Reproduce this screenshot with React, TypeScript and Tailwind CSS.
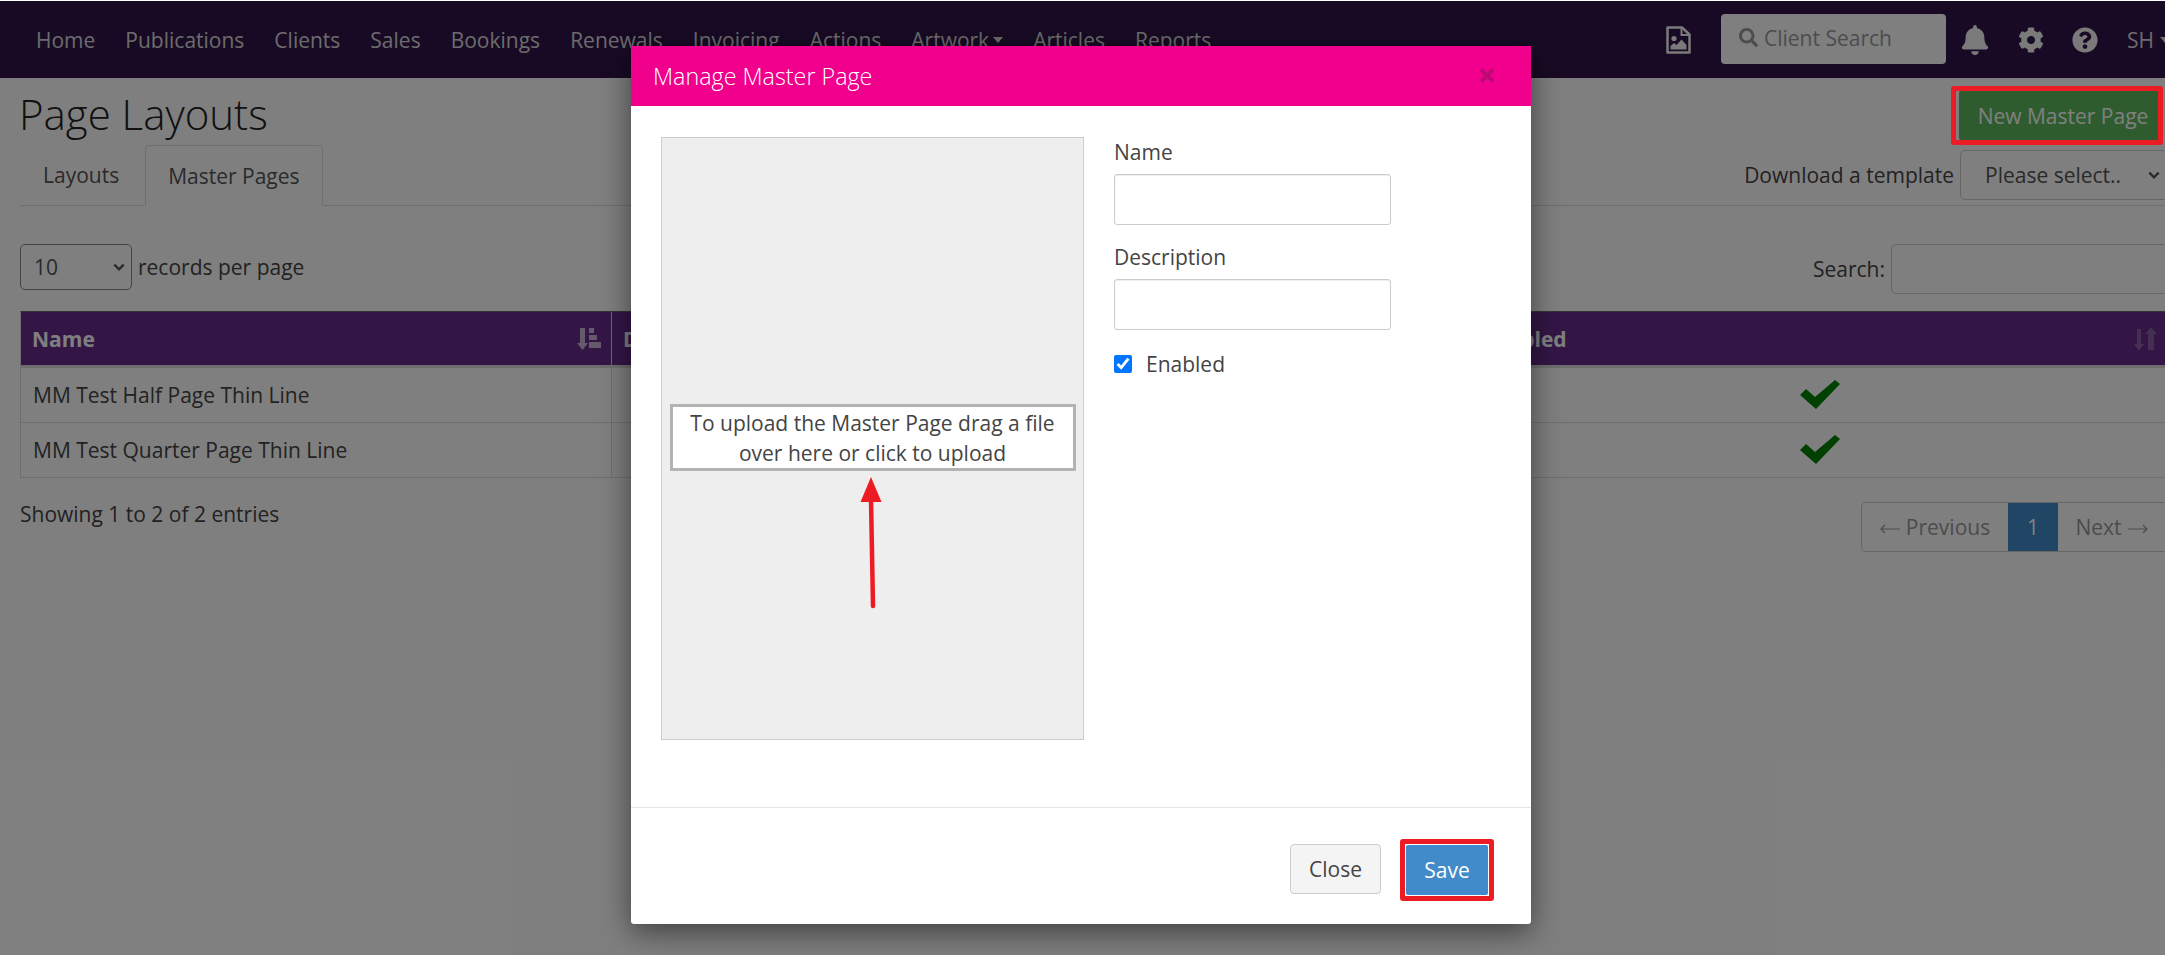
import React from "react";
import { FaSearch, FaBell, FaCog, FaQuestionCircle } from "react-icons/fa";

const nav = ["Home", "Publications", "Clients", "Sales", "Bookings", "Renewals", "Invoicing", "Actions", "Artwork", "Articles", "Reports"];

function SortAsc() {
  return (
    <svg viewBox="0 0 24 24" className="w-[24px] h-[24px]" fill="currentColor">
      <path d="M3 1h5v15h3l-5.500 7L0 16h3z" />
      <path d="M12 1h5v5h-5zM12 8h8v5h-8zM12 15h12v6H12z" />
    </svg>
  );
}
function SortBoth() {
  return (
    <svg viewBox="0 0 24 24" className="w-[24px] h-[24px]" fill="currentColor">
      <path d="M4 2h4v15h3l-5 6.500L1 17h3z" />
      <path d="M15 23V7h-3l6-6.500L24 7h-3v16z" />
    </svg>
  );
}
function Check() {
  return (
    <svg viewBox="0 0 40 30" className="w-[40px] h-[30px]" fill="#008000">
      <path d="M0 15 L6 9 L15 17 L35 0 L40 4 L16 29 Z" />
    </svg>
  );
}
function FileImage() {
  return (
    <svg viewBox="0 0 25 28" className="w-[25px] h-[28px]">
      <path d="M1.500 1.500H16L23.500 8.500V26.500H1.500Z" fill="none" stroke="currentColor" strokeWidth="2.500" strokeLinejoin="round" />
      <path d="M15.500 1.500V9H23.500" fill="none" stroke="currentColor" strokeWidth="2" />
      <circle cx="8" cy="12.500" r="2.600" fill="currentColor" />
      <path d="M4.500 23.500V20L8 17l2.500 2 5-5.500 5 5.500v4.500z" fill="currentColor" />
    </svg>
  );
}

export default function App() {
  return (
    <div className="relative w-[2165px] h-[955px] overflow-hidden bg-white text-[21px] leading-[30px] text-[#444]" style={{ fontFamily: '"Open Sans", sans-serif' }}>
      <nav className="mt-px h-[77px] bg-[#301448] flex items-center pl-[21px] text-[#d8d8d8]">
        <div className="flex items-center">
          {nav.map((n) => (
            <span key={n} className="px-[15px] flex items-center">
              {n}
              {n === "Artwork" && <span className="ml-[4px] w-0 h-0 border-x-[5px] border-x-transparent border-t-[6px] border-t-[#d8d8d8]" />}
            </span>
          ))}
        </div>
        <div className="ml-auto flex items-center text-[#f4f4f4]">
          <FileImage />
          <div className="ml-[30px] w-[225px] h-[50px] -mt-[2px] pb-[2px] rounded-[4px] bg-white flex items-center pl-[18px] text-[#999]">
            <FaSearch className="w-[19px] h-[19px] mr-[6px]" />
            Client Search
          </div>
          <FaBell className="ml-[15px] w-[28px] h-[30px]" />
          <FaCog className="ml-[29px] w-[26px] h-[26px]" />
          <FaQuestionCircle className="ml-[28px] w-[26px] h-[26px]" />
          <span className="ml-[29px] w-[38px] flex items-center text-[#d8d8d8]">
            SH
            <span className="ml-[6px] w-0 h-0 border-x-[5px] border-x-transparent border-t-[6px] border-t-[#d8d8d8]" />
          </span>
        </div>
      </nav>

      <main className="w-[2188px] px-[20px]">
        <div className="h-[67px] flex justify-between">
          <h1 className="text-[42px] leading-[50px] font-light text-[#222] mt-[11px] -ml-px">Page Layouts</h1>
          <button className="self-end mb-[5px] mr-[9px] h-[49px] w-[200px] pl-[8px] bg-[#5cb85c] text-white rounded-[2px] flex items-center justify-center">New Master Page</button>
        </div>

        <div className="h-[61px] border-b border-[#ddd] flex items-end justify-between">
          <div className="flex items-end">
            <div className="h-[60px] pl-[23px] pr-[26px] flex items-center text-[#555]">Layouts</div>
            <div className="h-[61px] -mb-px px-[22px] flex items-center border border-[#ddd] border-b-white bg-white rounded-t-[5px] text-[#555]">Master Pages</div>
          </div>
          <div className="flex items-center self-start mt-[5px]">
            <span className="mr-[6px]">Download a template</span>
            <div className="w-[208px] h-[50px] border border-[#ccc] rounded-[5px] flex items-center pl-[24px] pr-[6px] justify-between text-[#555]">
              Please select..
              <svg viewBox="0 0 12 12" className="w-[14px] h-[14px]" fill="none" stroke="currentColor" strokeWidth="2"><path d="M2 4l4 4 4-4" /></svg>
            </div>
          </div>
        </div>

        <div className="mt-[38px] h-[50px] flex items-start justify-between">
          <div className="flex items-center">
            <div className="w-[112px] h-[46px] border border-[#888] rounded-[5px] flex items-center pl-[13px] pr-[5px] justify-between text-[#555]">
              10
              <svg viewBox="0 0 12 12" className="w-[14px] h-[14px]" fill="none" stroke="currentColor" strokeWidth="2"><path d="M2 4l4 4 4-4" /></svg>
            </div>
            <span className="ml-[6px]">records per page</span>
          </div>
          <div className="flex items-center">
            <span className="mr-[6px]">Search:</span>
            <div className="w-[277px] h-[50px] border border-[#ccc] rounded-[5px]" />
          </div>
        </div>

        <div className="mt-[17px] border border-[#ddd] border-t-[#666]">
          <div className="h-[53px] bg-[#662d8c] text-white font-bold flex items-center">
            <div className="w-[591px] shrink-0 h-full border-r border-[#ddd] pl-[11px] flex items-center justify-between pr-[10px]">
              <span>Name</span>
              <span className="text-[#c8b4d8]"><SortAsc /></span>
            </div>
            <div className="w-[860px] shrink-0 h-full px-[11px] flex items-center">Description</div>
            <div className="flex-1 min-w-0 h-full pl-[11px] flex items-center justify-between pr-[10px]">
              <span>Enabled</span>
              <span className="text-[#8a60a6]"><SortBoth /></span>
            </div>
          </div>
          <div className="h-[3px] bg-[#ddd]" />
          {["MM Test Half Page Thin Line", "MM Test Quarter Page Thin Line"].map((t, i) => (
            <div key={t} className={`flex items-center ${i === 0 ? "h-[55px] border-b border-[#ddd]" : "h-[54px]"}`}>
              <div className="w-[591px] shrink-0 h-full border-r border-[#ddd] px-[12px] flex items-center">{t}</div>
              <div className="w-[860px] shrink-0 h-full" />
              <div className="flex-1 min-w-0 h-full flex items-center pl-[328px]">
                <Check />
              </div>
            </div>
          ))}
        </div>

        <div className="mt-[24px] flex items-start justify-between">
          <span className="mt-[-3px]">Showing 1 to 2 of 2 entries</span>
          <div className="flex h-[50px] border border-[#ccc] rounded-[5px] text-[#999] overflow-hidden">
            <span className="w-[146px] flex items-center justify-center">
              <svg viewBox="0 0 20 10" className="w-[20px] h-[10px] mr-[6px] mt-[3px]" fill="none" stroke="currentColor" strokeWidth="1.200"><path d="M20 5H1M5 1L1 5l4 4" /></svg>
              Previous
            </span>
            <span className="w-[50px] bg-[#428bca] text-white flex items-center justify-center">1</span>
            <span className="w-[109px] flex items-center justify-center pr-[2px]">
              Next
              <svg viewBox="0 0 20 10" className="w-[20px] h-[10px] ml-[6px] mt-[3px]" fill="none" stroke="currentColor" strokeWidth="1.200"><path d="M0 5h19M15 1l4 4-4 4" /></svg>
            </span>
          </div>
        </div>
      </main>

      <div className="absolute left-0 right-0 top-px bottom-0 bg-black/50" />

      <div className="absolute left-[1951px] top-[86px] w-[212px] h-[59px] border-[5px] border-[#ed1c24] rounded-[3px]" />

      <div className="absolute left-[631px] top-[46px] w-[900px] h-[878px] bg-white rounded-b-[3px] shadow-[0_8px_30px_rgba(0,0,0,0.5)] flex flex-col">
        <div className="h-[60px] bg-[#f0008c] flex items-center justify-between pl-[22px] pr-[35px] text-white">
          <span className="text-[23.300px] font-light">Manage Master Page</span>
          <span className="text-[#b80a72] text-[32px] font-bold leading-none -mt-[2px]">×</span>
        </div>
        <div className="flex-1 flex items-start pt-[31px] pl-[30px]">
          <div className="w-[423px] h-[603px] bg-[#eee] border border-[#ccc] flex items-center justify-center">
            <div className="relative w-[406px] h-[67px] -mt-[2px] pt-px border-[3px] border-[#b3b3b3] bg-white text-center leading-[30px] text-[#444]">
              To upload the Master Page drag a file over here or click to upload
              <svg className="absolute left-[177px] top-[64px] overflow-visible" width="40" height="140" viewBox="0 0 40 140" fill="#ed1c24">
                <path d="M21 6L31.500 31H10.500z" />
                <path d="M21 28l2 107" stroke="#ed1c24" strokeWidth="4.500" strokeLinecap="round" fill="none" />
              </svg>
            </div>
          </div>
          <div className="ml-[30px] w-[277px] flex flex-col text-[#444]">
            <label className="h-[30px]">Name</label>
            <div className="mt-[7px] h-[51px] border border-[#ccc] rounded-[3px] shadow-[inset_0_1px_1px_rgba(0,0,0,0.075)]" />
            <label className="h-[30px] mt-[17px]">Description</label>
            <div className="mt-[7px] h-[51px] border border-[#ccc] rounded-[3px] shadow-[inset_0_1px_1px_rgba(0,0,0,0.075)]" />
            <label className="mt-[19px] flex items-center">
              <input type="checkbox" defaultChecked className="w-[18px] h-[18px] accent-[#0075ff]" />
              <span className="ml-[14px]">Enabled</span>
            </label>
          </div>
        </div>
        <div className="h-[117px] border-t border-[#e5e5e5] flex items-start justify-end pt-[31px] pr-[37px]">
          <button className="h-[50px] w-[91px] mt-[5px] bg-[#f4f4f4] border border-[#ccc] rounded-[4px] text-[#444]">Close</button>
          <div className="ml-[19px] border-[5px] border-[#ed1c24] rounded-[3px] p-px">
            <button className="h-[50px] w-[82px] bg-[#428bca] text-white rounded-[2px]">Save</button>
          </div>
        </div>
      </div>
    </div>
  );
}
